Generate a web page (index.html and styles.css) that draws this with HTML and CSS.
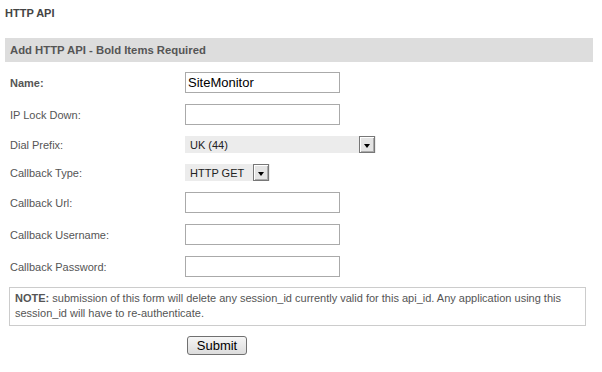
FILE: index.html
```html
<!DOCTYPE html>
<html lang="en">
<head>
  <meta charset="UTF-8" />
  <title>HTTP API</title>
  <link rel="stylesheet" href="styles.css">
</head>
<body>

<div class="page">
  <h1>HTTP API</h1>
  <div class="bar">Add HTTP API - Bold Items Required</div>

  <form class="api-form" action="#" method="POST">
    <div class="row">
      <label class="req">Name:</label>
      <input type="text" name="name" value="SiteMonitor">
    </div>
    <div class="row">
      <label>IP Lock Down:</label>
      <input type="text" name="ip_lock">
    </div>
    <div class="row">
      <label>Dial Prefix:</label>
      <div class="select wide">
        <select name="prefix"><option>UK (44)</option></select>
        <span class="arrow"></span>
      </div>
    </div>
    <div class="row">
      <label>Callback Type:</label>
      <div class="select narrow">
        <select name="cb_type"><option>HTTP GET</option></select>
        <span class="arrow"></span>
      </div>
    </div>
    <div class="row">
      <label>Callback Url:</label>
      <input type="text" name="cb_url">
    </div>
    <div class="row">
      <label>Callback Username:</label>
      <input type="text" name="cb_user">
    </div>
    <div class="row">
      <label>Callback Password:</label>
      <input type="password" name="cb_pass">
    </div>

    <div class="note">
      <b>NOTE:</b> submission of this form will delete any session_id currently valid for this api_id. Any application using this session_id will have to re-authenticate.
    </div>

    <div class="row submit-row">
      <label></label>
      <button type="submit">Submit</button>
    </div>
  </form>
</div>

</body>
</html>
```

FILE: styles.css
```css
body {
  margin: 0; background: #fff;
  font-family: "Liberation Sans", Arial, sans-serif; font-size: 11px; color: #555;
}
.page { padding: 7px 9px 0 5px; }
h1 { margin: 0; font-size: 11px; line-height: 13px; color: #444; }
.bar {
  margin-top: 18px; height: 24px; line-height: 24px; padding: 0 5px;
  background: #ddd; font-weight: bold; font-size: 11.3px; color: #555;
}
.api-form { padding: 10px 0 0 4px; display: flex; flex-direction: column; gap: 11px; }
.row { display: flex; align-items: center; }
.row label { width: 175px; padding-left: 1px; flex-shrink: 0; }
.row label.req { font-weight: bold; }
input {
  box-sizing: border-box; width: 155px; height: 21px; margin: 0;
  border: 1px solid #aaa; padding: 0 2px;
  font-family: "Liberation Sans", Arial, sans-serif; font-size: 13px; color: #000;
}
.select { display: flex; height: 17px; background: #ececec; }
.select.wide { width: 191px; }
.select.narrow { width: 85px; }
.select select {
  appearance: none; -webkit-appearance: none; flex: 1; min-width: 0;
  border: none; background: transparent; padding: 0 0 0 5px; margin: 0;
  font-family: "Liberation Sans", Arial, sans-serif; font-size: 11px; color: #222;
}
.arrow {
  box-sizing: border-box; width: 16px; height: 17px; margin-right: 1px;
  border: 1px solid #777; box-shadow: inset 1px 1px 0 #fff, inset -1px -1px 0 #aaa;
  background: #e4e4e4; display: flex; align-items: center; justify-content: center;
}
.arrow::after {
  content: ""; border-left: 3.5px solid transparent; border-right: 3.5px solid transparent;
  border-top: 4px solid #000; margin-top: 2px;
}
.note {
  margin: -1px 7px 0 0; border: 1px solid #ccc; padding: 3px 5px 4px;
  line-height: 15px; color: #555;
}
.submit-row { margin-top: -1px; }
button {
  margin-left: 2px; width: 60px; height: 19px; padding: 0;
  border: 1px solid #707070; border-radius: 3px;
  background: linear-gradient(#f6f6f6, #dcdcdc);
  font-family: "Liberation Sans", Arial, sans-serif; font-size: 13px; color: #000;
}
```
